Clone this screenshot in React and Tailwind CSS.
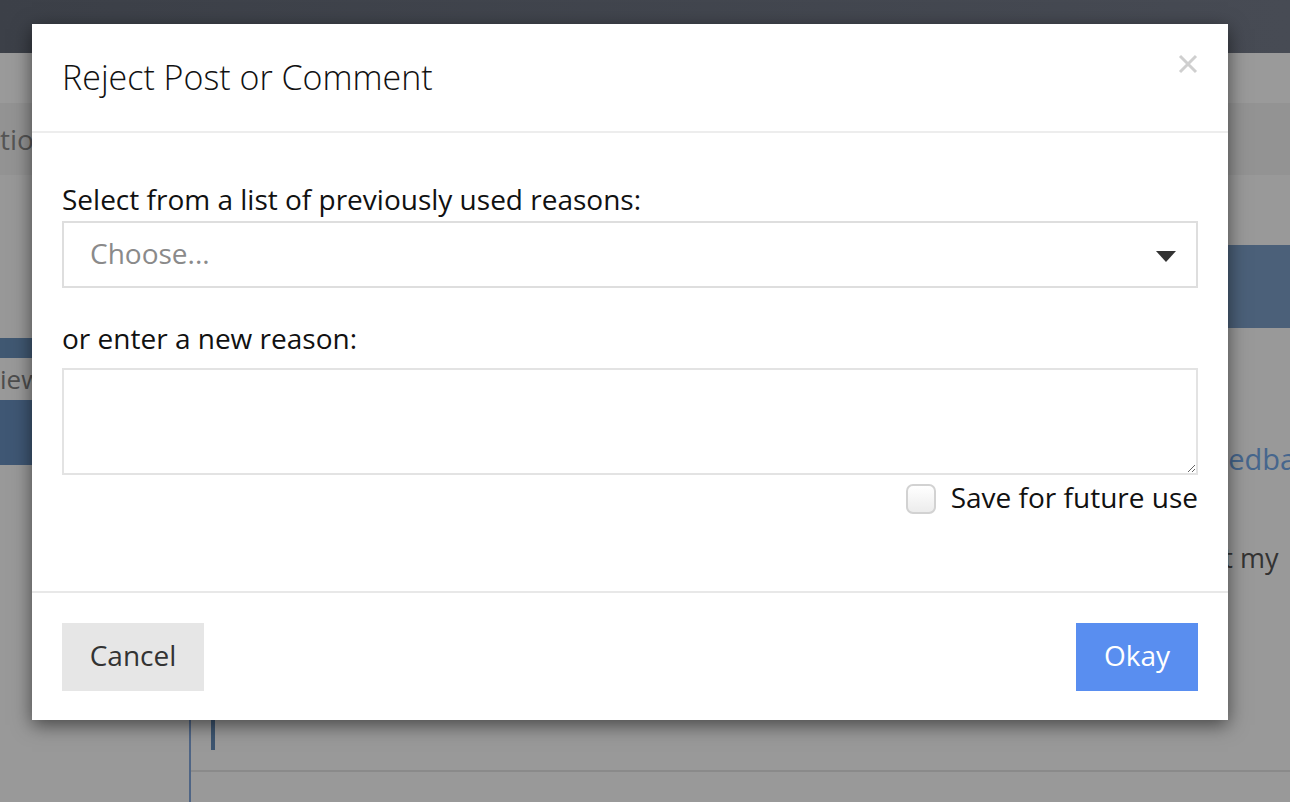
import React, { useState } from "react";

const font = { fontFamily: '"Open Sans", "Liberation Sans", sans-serif' };

const PageBehind = () => {
    return (
        <div className="flex flex-col h-full text-[#555]" style={font}>
            <div className="h-[53px] bg-gradient-to-r from-[#3c4048] to-[#474b54]" />
            <div className="h-[50px] bg-[#9a9a9a]" />
            <div className="h-[72px] bg-[#939393] flex items-center text-[28px]">tio</div>
            <div className="flex flex-1 min-w-0">
                <div className="w-[189px] shrink-0 flex flex-col">
                    <div className="h-[163px] bg-[#989898]" />
                    <div className="h-[20px] bg-[#405872]" />
                    <div className="h-[42px] bg-[#999] flex items-center text-[26px] text-[#4d4d4d]">iew</div>
                    <div className="h-[65px] bg-[#3f5774]" />
                    <div className="flex-1 bg-[#999]" />
                </div>
                <div className="flex-1 min-w-0 overflow-hidden flex flex-col border-l-2 border-[#4f6585]">
                    <div className="h-[70px] bg-[#999]" />
                    <div className="h-[83px] bg-[#4b6079]" />
                    <div className="h-[110px]" />
                    <div className="h-[42px] pl-[1006px] text-[29px] leading-[42px] text-[#46668d] whitespace-nowrap">Feedback</div>
                    <div className="h-[58px]" />
                    <div className="h-[40px] pl-[968px] text-[27px] leading-[40px] text-[#333] whitespace-nowrap">about my</div>
                    <div className="h-[122px]" />
                    <div className="h-[72px] border-b-2 border-[#8a8a8a] pl-[20px] pt-[20px]">
                        <div className="w-[4px] h-[30px] bg-[#3d5570]" />
                    </div>
                    <div className="flex-1" />
                </div>
            </div>
        </div>
    );
};

const RejectModal = () => {
    const [reason, setReason] = useState("");
    const [newReason, setNewReason] = useState("");
    const [save, setSave] = useState(false);

    return (
        <div
            className="absolute left-[32px] top-[24px] w-[1196px] h-[696px] bg-white flex flex-col shadow-[0_5px_18px_rgba(0,0,0,0.55)] text-black"
            style={font}
        >
            {/* header */}
            <div className="h-[109px] border-b-2 border-[#ededed] flex items-start justify-between pl-[30px] pr-[30px]">
                <h4 className="mt-[31px] text-[34px] font-light leading-[44px] text-[#111]">Reject Post or Comment</h4>
                <button className="mt-[30px] w-[20px] h-[20px] flex items-center justify-center">
                    <svg width="20" height="20" viewBox="0 0 20 20">
                        <path d="M2 2 L18 18 M18 2 L2 18" stroke="#cfcfcf" strokeWidth="3" />
                    </svg>
                </button>
            </div>

            {/* body */}
            <div className="flex-1 px-[30px] pt-[49px]">
                <label className="block text-[28px] leading-[34px] text-[#111]">Select from a list of previously used reasons:</label>
                <div className="mt-[5px] relative h-[67px] border-2 border-[#dedede] flex items-center">
                    <select
                        value={reason}
                        onChange={(e) => setReason(e.target.value)}
                        className="appearance-none w-full h-full bg-transparent pl-[26px] pb-[3px] text-[28px] text-[#8a8a8a] outline-none"
                        style={font}
                    >
                        <option value="">Choose...</option>
                    </select>
                    <svg className="absolute right-[20px] top-[28px] pointer-events-none" width="20" height="11" viewBox="0 0 20 11">
                        <path d="M0 0 H20 L10 11 Z" fill="#333" />
                    </svg>
                </div>

                <label className="block mt-[33px] text-[28px] leading-[34px] text-[#111]">or enter a new reason:</label>
                <textarea
                    value={newReason}
                    onChange={(e) => setNewReason(e.target.value)}
                    className="mt-[13px] block w-full h-[107px] border-2 border-[#e3e3e3] outline-none resize-y p-2 text-[22px]"
                />
                <div className="flex justify-end items-center gap-[15px] mt-[7px]">
                    <button
                        onClick={() => setSave(!save)}
                        className="w-[30px] h-[30px] rounded-[7px] border-2 border-[#d2d2d2] bg-gradient-to-b from-white to-[#ececec] flex items-center justify-center"
                    >
                        {save && <span className="text-[18px] text-[#333]">✓</span>}
                    </button>
                    <span className="text-[28px] leading-[30px] pb-[3px] text-[#111]">Save for future use</span>
                </div>
            </div>

            {/* footer */}
            <div className="h-[129px] border-t-2 border-[#e8e8e8] flex items-center justify-between px-[30px]">
                <button className="w-[142px] h-[68px] pb-[3px] bg-[#e6e6e6] text-[28px] text-[#333]" style={font}>Cancel</button>
                <button className="w-[122px] h-[68px] pb-[3px] bg-[#598ef0] text-[28px] text-white" style={font}>Okay</button>
            </div>
        </div>
    );
};

const App = () => {
    return (
        <div className="relative w-full h-[802px] overflow-hidden bg-[#999]">
            <PageBehind />
            <RejectModal />
        </div>
    );
};

export default App;
